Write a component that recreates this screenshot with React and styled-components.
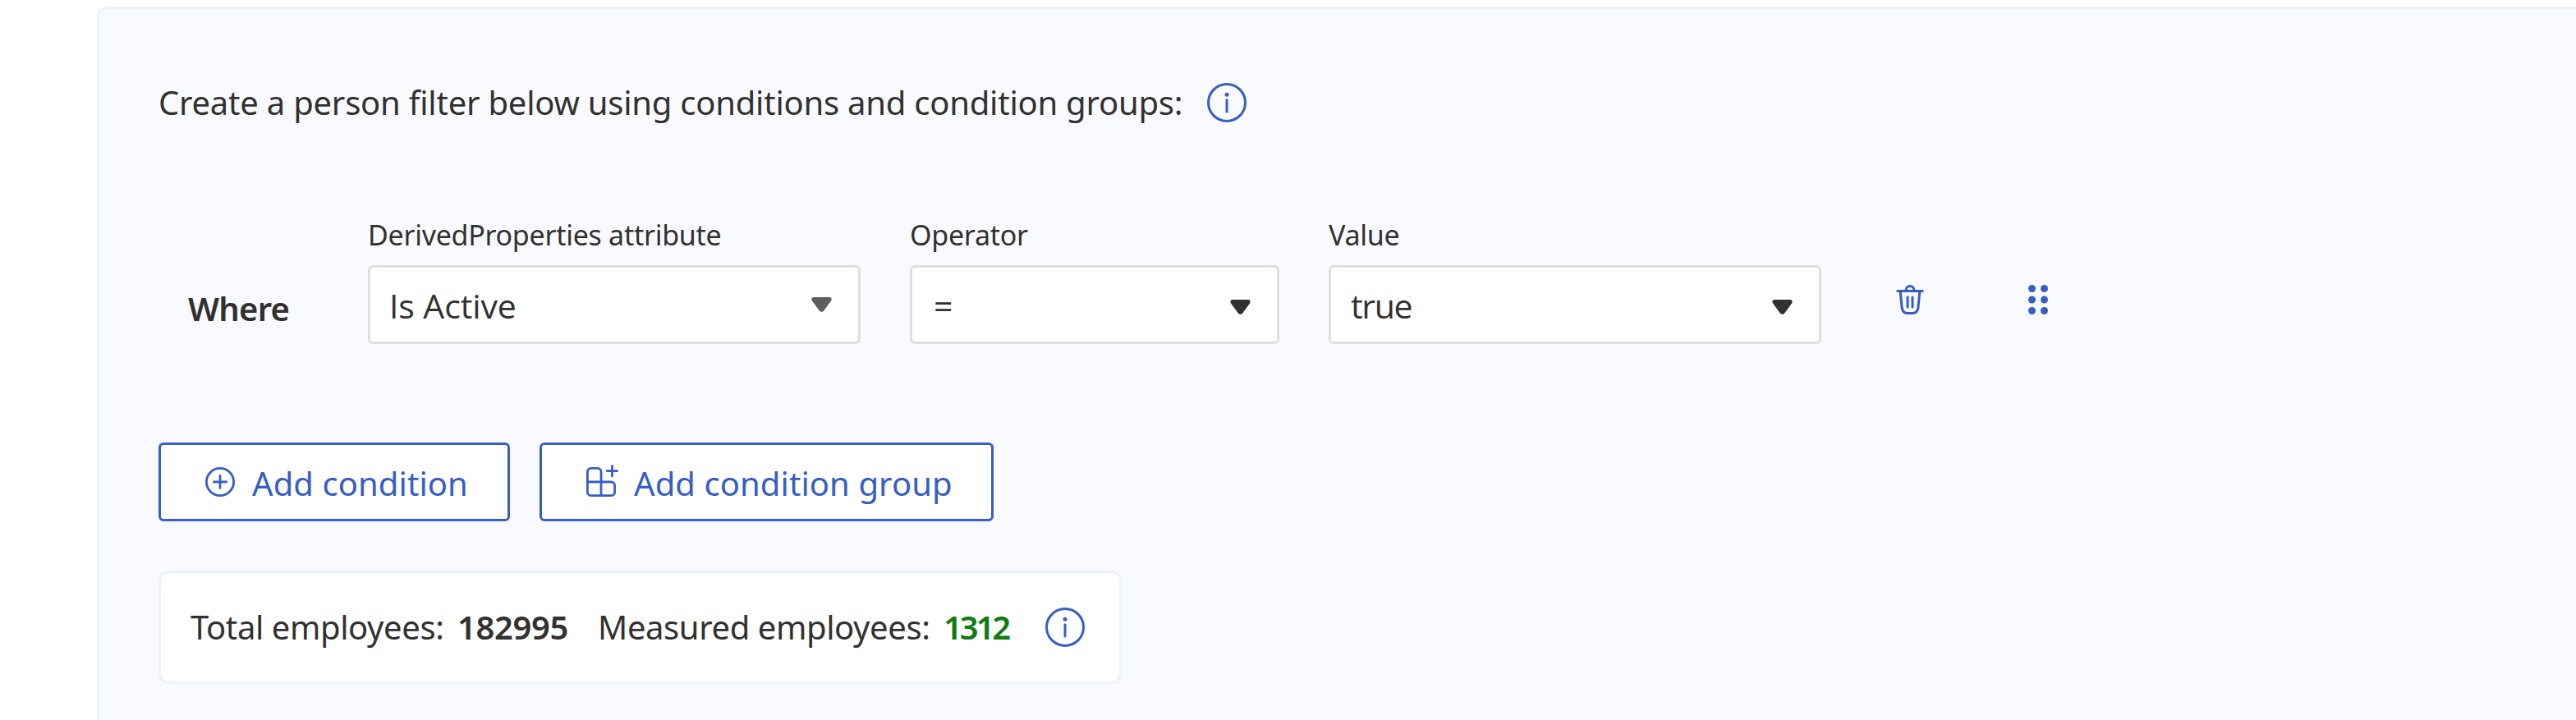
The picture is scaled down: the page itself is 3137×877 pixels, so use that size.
import React from "react";
import styled, { createGlobalStyle, ThemeProvider } from "styled-components";

const theme = {
  blue: "#365ec4",
  text: "#323130",
  muted: "#605e5c",
  green: "#107c10",
  field: "#e1dfdd",
  edge: "#ebf2ff",
  panel: "#f9faff",
};

const GlobalStyle = createGlobalStyle`
  * { box-sizing: border-box; }
  html, body { margin: 0; background: #fff; overflow: hidden; }
  body {
    font-family: "Noto Sans", "Open Sans", sans-serif;
    font-size: 40px;
    color: ${theme.text};
  }
  svg { display: block; flex: none; }
`;

const Page = styled.main`
  display: flex;
  flex-direction: column;
  height: 877px;
  padding: 8px 0 0 118px;
  overflow: hidden;
`;

const Panel = styled.section`
  display: flex;
  flex: none;
  flex-direction: column;
  align-items: flex-start;
  width: 3100px;
  height: 960px;
  padding: 86px 0 0 72px;
  border: 3px solid ${(p) => p.theme.edge};
  border-radius: 12px;
  background: ${(p) => p.theme.panel};
`;

const Intro = styled.header`
  display: flex;
  align-items: center;
  height: 56px;
`;

const IntroText = styled.p`
  width: 1277px;
  margin: 0;
  padding-bottom: 1px;
  line-height: 52px;
  letter-spacing: -0.23px;
  white-space: nowrap;
`;

const FilterRow = styled.div`
  display: flex;
  align-items: flex-end;
  margin-top: 108px;
`;

const Where = styled.div`
  width: 255px;
  padding-left: 36px;
  margin-bottom: 15px;
  font-weight: 600;
  line-height: 56px;
  letter-spacing: -0.8px;
`;

const Field = styled.label`
  display: flex;
  flex-direction: column;
  width: ${(p) => p.$width}px;
  margin-right: 60px;
`;

const FieldLabel = styled.span`
  height: 62px;
  font-size: 34px;
  line-height: 50px;
  letter-spacing: -0.28px;
  white-space: nowrap;
`;

const SelectBox = styled.div`
  display: flex;
  align-items: center;
  justify-content: space-between;
  height: 96px;
  padding: 0 32px 0 ${(p) => p.$inset}px;
  border: 3px solid ${(p) => p.theme.field};
  border-radius: 6px;
  background: #fff;
`;

const SelectValue = styled.span`
  padding-top: 2px;
  font-family: "Open Sans", "Noto Sans", sans-serif;
  font-size: 41px;
  line-height: 56px;
  letter-spacing: ${(p) => p.$tracking || 0}px;
`;

const CaretSlot = styled.span`
  padding-top: ${(p) => (p.$muted ? 0 : 6)}px;
  color: ${(p) => (p.$muted ? p.theme.muted : p.theme.text)};
`;

const IconButton = styled.button`
  display: flex;
  width: 36px;
  height: 36px;
  margin: 0 0 36px ${(p) => p.$offset}px;
  padding: 0;
  border: 0;
  background: none;
  color: ${(p) => p.theme.blue};
`;

const Actions = styled.div`
  display: flex;
  gap: 36px;
  margin-top: 120px;
`;

const ActionButton = styled.button`
  display: flex;
  align-items: center;
  width: ${(p) => p.$width}px;
  height: 96px;
  padding: 0 0 0 54px;
  border: 3px solid ${(p) => p.theme.blue};
  border-radius: 6px;
  background: #fff;
  color: ${(p) => p.theme.blue};
  font: inherit;
  letter-spacing: 0.08px;
  white-space: nowrap;
`;

const ActionText = styled.span`
  padding-top: 3px;
  margin-left: ${(p) => p.$gap}px;
  line-height: 56px;
`;

const Summary = styled.div`
  display: flex;
  align-items: center;
  width: 1173px;
  height: 138px;
  margin-top: 60px;
  padding-left: 36px;
  border: 3px solid ${(p) => p.theme.edge};
  border-radius: 12px;
  background: #fff;
  line-height: 56px;
  white-space: nowrap;
`;

const SummaryLabel = styled.span`
  width: ${(p) => p.$width}px;
  padding-bottom: 1px;
  letter-spacing: -0.4px;
`;

const SummaryCount = styled.strong`
  width: ${(p) => p.$width}px;
  padding-bottom: 1px;
  font-weight: 600;
  color: ${(p) => (p.$measured ? p.theme.green : p.theme.text)};
  letter-spacing: ${(p) => (p.$measured ? -3.1 : -0.4)}px;
`;

const InfoSvg = styled.svg`
  color: ${(p) => p.theme.blue};
`;

const InfoIcon = () => (
  <InfoSvg width="48" height="48" viewBox="0 0 48 48" fill="none">
    <circle cx="24" cy="24" r="22.5" stroke="currentColor" strokeWidth="3" />
    <circle cx="24" cy="14.3" r="2.5" fill="currentColor" />
    <path d="M24 20.7V35" stroke="currentColor" strokeWidth="3" strokeLinecap="round" />
  </InfoSvg>
);

const CaretIcon = () => (
  <svg width="25" height="18" viewBox="0 0 25 18">
    <path
      d="M3 0H22C24.4 0 25.4 2.6 24 4.4L15.4 16.2C13.8 18.4 11.2 18.4 9.6 16.2L1 4.4C-.4 2.6 .6 0 3 0Z"
      fill="currentColor"
    />
  </svg>
);

const TrashIcon = () => (
  <svg width="36" height="36" viewBox="0 0 36 36" fill="none" stroke="currentColor" strokeWidth="3" strokeLinecap="round">
    <path d="M2.8 7.4H33.2" />
    <path d="M13 7C13 3.8 15 1.5 18 1.5S23 3.8 23 7" />
    <path d="M6.2 8L8.1 27.8C8.6 32 11 34.4 14.6 34.4H21.4C25 34.4 27.4 32 27.9 27.8L29.8 8" />
    <path d="M15 15V27M21 15V27" />
  </svg>
);

const GripIcon = () => (
  <svg width="36" height="36" viewBox="0 0 36 36" fill="currentColor">
    {[4.5, 18, 31.5].map((y) => (
      <React.Fragment key={y}>
        <circle cx="10.5" cy={y} r="4.5" />
        <circle cx="25.5" cy={y} r="4.5" />
      </React.Fragment>
    ))}
  </svg>
);

const PlusCircleIcon = () => (
  <svg width="36" height="36" viewBox="0 0 36 36" fill="none" stroke="currentColor" strokeWidth="2.8" strokeLinecap="round">
    <circle cx="18" cy="18" r="16.6" />
    <path d="M18 10.4V25.6M10.4 18H25.6" />
  </svg>
);

const GroupAddIcon = () => (
  <svg width="39" height="42" viewBox="0 0 39 42" fill="none" stroke="currentColor" strokeWidth="2.8" strokeLinecap="round">
    <path d="M18 21V8.6A4.2 4.2 0 0 0 13.8 4.4H5.6A4.2 4.2 0 0 0 1.4 8.6V33.4A4.2 4.2 0 0 0 5.6 37.6H30.4A4.2 4.2 0 0 0 34.6 33.4V25.2A4.2 4.2 0 0 0 30.4 21H1.4" />
    <path d="M18 21V37.6" />
    <path d="M31.5 1.5V14M25.2 7.6H37.6" />
  </svg>
);

function SelectField({ label, value, width, inset, tracking, muted }) {
  return (
    <Field $width={width}>
      <FieldLabel>{label}</FieldLabel>
      <SelectBox $inset={inset}>
        <SelectValue $tracking={tracking}>{value}</SelectValue>
        <CaretSlot $muted={muted}>
          <CaretIcon />
        </CaretSlot>
      </SelectBox>
    </Field>
  );
}

export default function App() {
  return (
    <ThemeProvider theme={theme}>
      <GlobalStyle />
      <Page>
        <Panel>
          <Intro>
            <IntroText>Create a person filter below using conditions and condition groups:</IntroText>
            <InfoIcon />
          </Intro>
          <FilterRow>
            <Where>Where</Where>
            <SelectField label="DerivedProperties attribute" value="Is Active" width={600} inset={23} tracking={-0.1} muted />
            <SelectField label="Operator" value="=" width={450} inset={26} />
            <SelectField label="Value" value="true" width={600} inset={24} tracking={-1.3} />
            <IconButton $offset={30} aria-label="Delete condition">
              <TrashIcon />
            </IconButton>
            <IconButton $offset={120} aria-label="Move condition">
              <GripIcon />
            </IconButton>
          </FilterRow>
          <Actions>
            <ActionButton $width={428}>
              <PlusCircleIcon />
              <ActionText $gap={21}>Add condition</ActionText>
            </ActionButton>
            <ActionButton $width={553}>
              <GroupAddIcon />
              <ActionText $gap={19}>Add condition group</ActionText>
            </ActionButton>
          </Actions>
          <Summary>
            <SummaryLabel $width={325}>Total employees:</SummaryLabel>
            <SummaryCount $width={171}>182995</SummaryCount>
            <SummaryLabel $width={421}>Measured employees:</SummaryLabel>
            <SummaryCount $width={124} $measured>
              1312
            </SummaryCount>
            <InfoIcon />
          </Summary>
        </Panel>
      </Page>
    </ThemeProvider>
  );
}
